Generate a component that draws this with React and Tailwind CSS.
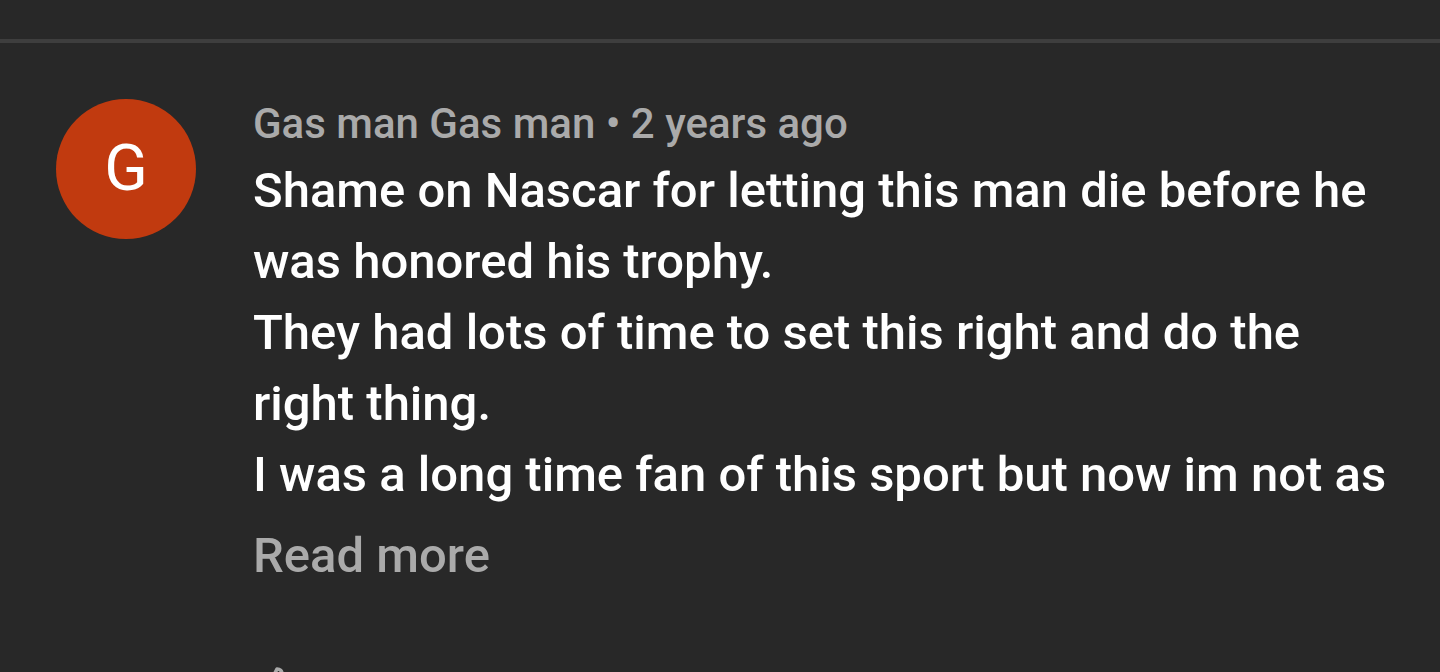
import React from "react";

export default function App() {
  const lines = [
    "Shame on Nascar for letting this man die before he",
    "was honored his trophy.",
    "They had lots of time to set this right and do the",
    "right thing.",
    "I was a long time fan of this sport but now im not as",
  ];
  return (
    <div
      className="w-[1440px] h-[672px] overflow-hidden bg-[#282828] text-white"
      style={{ fontFamily: "Roboto, 'Liberation Sans', sans-serif" }}
    >
      <div className="h-[39px]" />
      <div className="h-[4px] bg-[#3e3e3e]" />
      <div className="flex pl-[56px] pt-[56px] gap-[57px]">
        <div className="w-[140px] h-[140px] rounded-full bg-[#c13a0f] flex items-center justify-center shrink-0">
          <span className="text-[64px] leading-none text-white">G</span>
        </div>
        <div className="flex flex-col">
          <div className="text-[42px] leading-[50px] font-medium text-[#aaaaaa] whitespace-nowrap">
            Gas man Gas man • 2 years ago
          </div>
          <div className="text-[49px] leading-[71px] font-medium text-white mt-[6px]">
            {lines.map((l, i) => (
              <div key={i} className="whitespace-nowrap">{l}</div>
            ))}
          </div>
          <div className="text-[49px] leading-[71px] font-medium text-[#aaaaaa] mt-[10px]">
            Read more
          </div>
          <div className="mt-[72px] ml-[2px] text-[#aaaaaa]">
            <svg width="48" height="48" viewBox="0 0 24 24" fill="none" stroke="#aaaaaa" strokeWidth="1.8" strokeLinejoin="round">
              <path d="M7 11v10H3V11h4zM7 11l4-8c1.5 0 2.5 1 2.5 2.5V9h5.5a2 2 0 0 1 2 2.3l-1.3 7.5A2 2 0 0 1 17.7 21H7" />
            </svg>
          </div>
        </div>
      </div>
    </div>
  );
}
